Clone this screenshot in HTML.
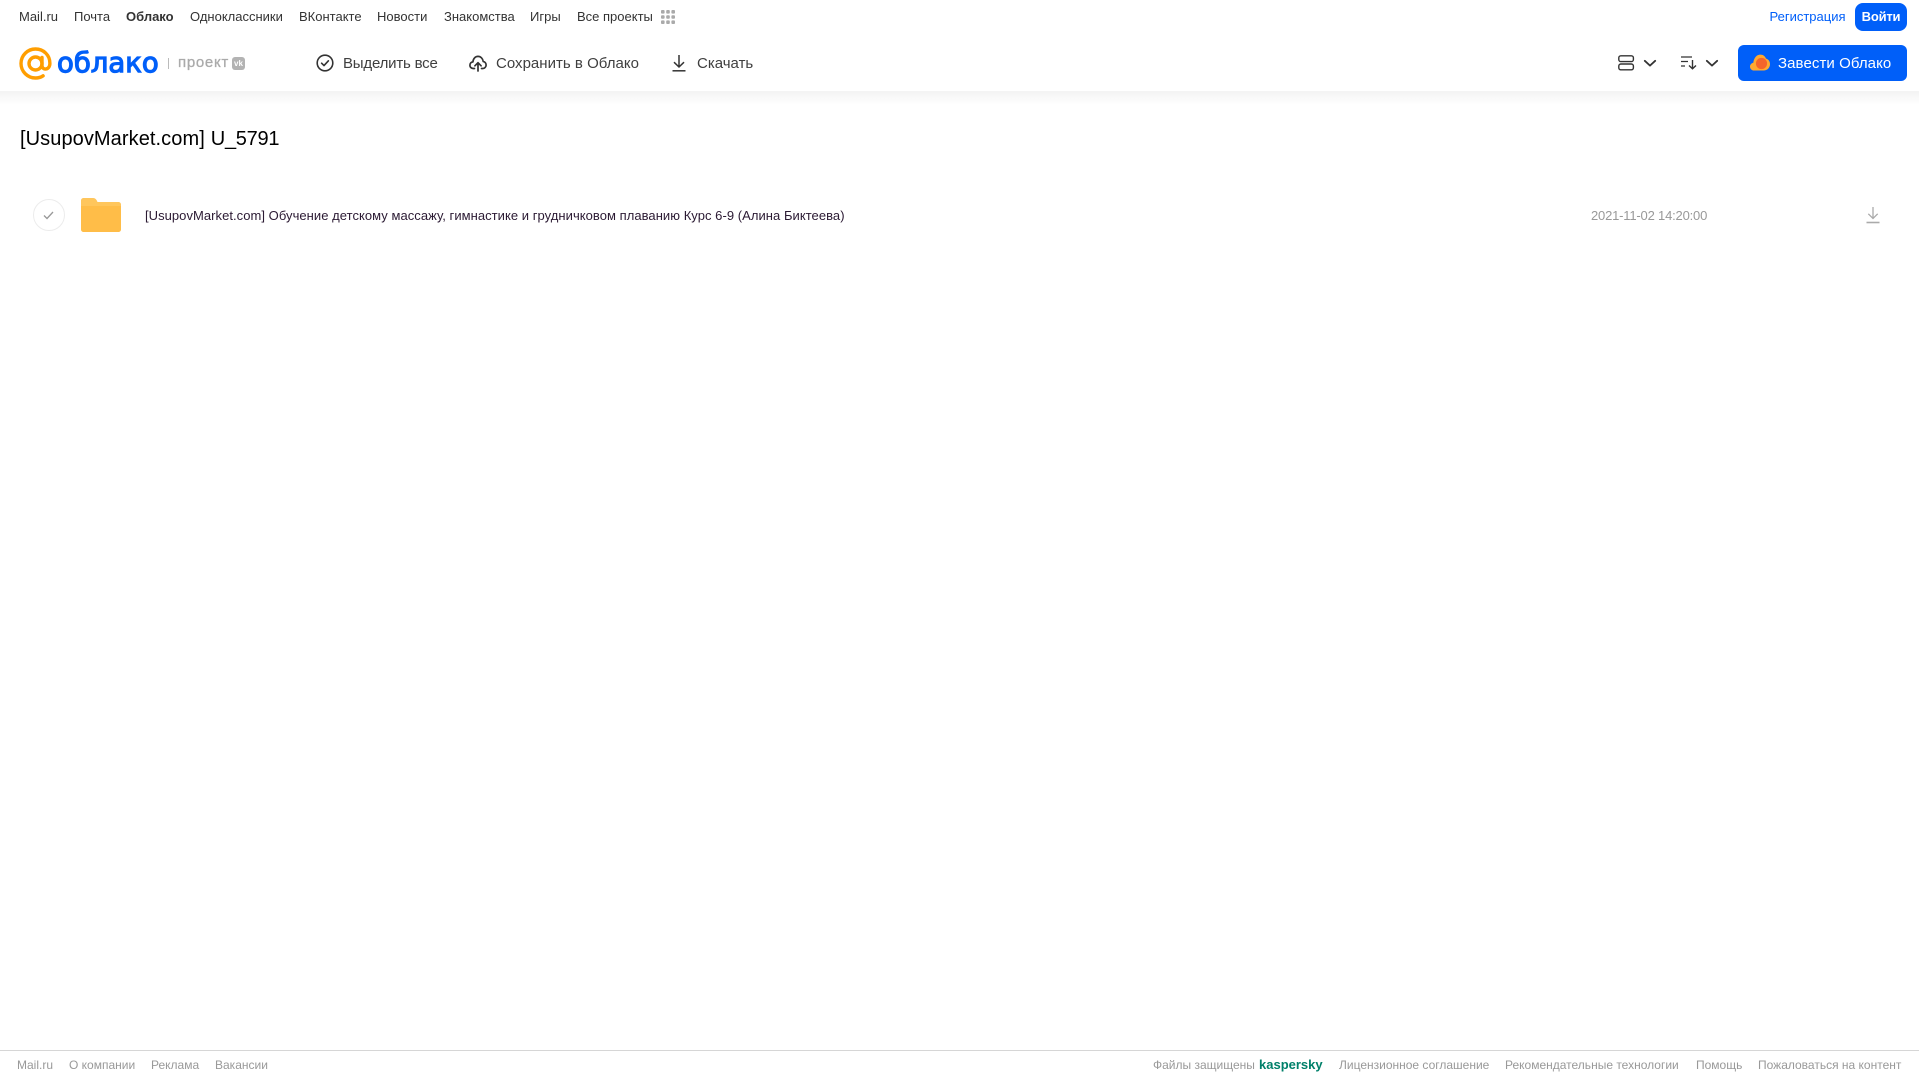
<!DOCTYPE html>
<html lang="ru">
<head>
<meta charset="utf-8">
<title>Облако</title>
<style>
html,body{margin:0;padding:0;background:#fff;}
body{width:1919px;height:1079px;position:relative;overflow:hidden;font-family:"Liberation Sans",Arial,sans-serif;}
.t{position:absolute;white-space:nowrap;line-height:20px;height:20px;}
.n{font-size:13px;color:#333;top:7px;}
.a{font-size:15px;color:#3f3f3f;top:54px;}
.f{font-size:12px;color:#999;top:1055px;}
svg{position:absolute;display:block;overflow:visible;}
</style>
</head>
<body>
<div style="position:absolute;left:0;top:91px;width:1919px;height:14px;background:linear-gradient(#f3f3f3,#fff);"></div>

<span class="t n" style="left:19px">Mail.ru</span>
<span class="t n" style="left:74px">Почта</span>
<span class="t n" style="left:126px;font-weight:bold">Облако</span>
<span class="t n" style="left:190px">Одноклассники</span>
<span class="t n" style="left:299px">ВКонтакте</span>
<span class="t n" style="left:377px">Новости</span>
<span class="t n" style="left:444px">Знакомства</span>
<span class="t n" style="left:530px">Игры</span>
<span class="t n" style="left:577px">Все проекты</span>
<svg style="left:661px;top:10px" width="14" height="14" fill="#aaa"><rect x="0" y="0" width="3.6" height="3.6" rx="1"/><rect x="5.2" y="0" width="3.6" height="3.6" rx="1"/><rect x="10.4" y="0" width="3.6" height="3.6" rx="1"/><rect x="0" y="5.2" width="3.6" height="3.6" rx="1"/><rect x="5.2" y="5.2" width="3.6" height="3.6" rx="1"/><rect x="10.4" y="5.2" width="3.6" height="3.6" rx="1"/><rect x="0" y="10.4" width="3.6" height="3.6" rx="1"/><rect x="5.2" y="10.4" width="3.6" height="3.6" rx="1"/><rect x="10.4" y="10.4" width="3.6" height="3.6" rx="1"/></svg>

<span class="t" style="left:1769.500px;top:7px;font-size:13px;color:#005ff9">Регистрация</span>
<div style="position:absolute;left:1855px;top:3px;width:52px;height:28px;border-radius:8px;background:#005ff9;color:#fff;font-size:13px;font-weight:bold;letter-spacing:-.2px;line-height:27px;text-align:center">Войти</div>

<!-- logo -->
<svg style="left:18.500px;top:47px" width="33" height="33" viewBox="0 0 33 33" fill="none" stroke="#ff9e00" stroke-width="3.4"><circle cx="16.5" cy="16.5" r="6.5"/><path d="M23 10.500V18.500c0 5 7.800 5 7.900-2.200C30.900 8 24.500 2 16.500 2 8.500 2 2 8.500 2 16.500S8.500 31 16.500 31c3.200 0 5.600-.8 7.600-2.200" stroke-linecap="round"/></svg>
<span class="t" style="left:57px;top:46.500px;height:32px;line-height:32px;font-size:27.500px;font-weight:normal;color:#005ff9;-webkit-text-stroke:1.200px #005ff9;font-family:'DejaVu Sans',sans-serif">облако</span>
<div style="position:absolute;left:168px;top:58px;width:1px;height:11px;background:#bbb"></div>
<span class="t" style="left:178px;top:53px;font-size:15px;color:#aaa;-webkit-text-stroke:.3px #aaa;letter-spacing:.7px">проект</span>
<div style="position:absolute;left:232px;top:57px;width:13px;height:13px;border-radius:3px;background:#b3b3b3;color:#fff;font-size:8px;font-weight:bold;line-height:13px;text-align:center">vk</div>

<!-- toolbar -->
<svg style="left:316px;top:54px" width="18" height="18" fill="none" stroke="#333" stroke-width="1.6"><circle cx="9" cy="9" r="7.8"/><path d="M5.6 9.2l2.4 2.4 4.4-4.8" stroke-linecap="round" stroke-linejoin="round"/></svg>
<span class="t a" style="left:343px;letter-spacing:-.2px">Выделить все</span>
<svg style="left:469px;top:54px" width="18" height="18" fill="none" stroke="#333" stroke-width="1.7" stroke-linecap="round" stroke-linejoin="round"><path d="M5.5 14.5H4.2C2.2 14.5.9 13 .9 11.2c0-1.700 1.200-3.100 3-3.300C4.200 4.600 6.300 2.400 9 2.400c2.700 0 4.800 2.100 5.200 5.100 1.700.2 2.900 1.800 2.900 3.600 0 1.800-1.400 3.400-3.300 3.400h-1.300"/><path d="M9 17V9M5.900 11.800L9 8.700l3.100 3.100"/></svg>
<span class="t a" style="left:496px;letter-spacing:.02px">Сохранить в Облако</span>
<svg style="left:671px;top:54px" width="16" height="18" fill="none" stroke="#333" stroke-width="1.5"><path d="M8 1v12M3 8.200L8 13l5-4.800"/><path d="M1.500 16.800h13"/></svg>
<span class="t a" style="left:697px">Скачать</span>

<svg style="left:1618px;top:55px" width="16" height="16" fill="none" stroke="#333" stroke-width="1.4"><rect x=".8" y=".8" width="14.600" height="5.800" rx="2"/><rect x=".8" y="9" width="14.600" height="5.800" rx="2"/></svg>
<svg style="left:1644px;top:60px" width="12" height="7" fill="none" stroke="#333" stroke-width="1.8"><path d="M.8.8L6 5.600 11.200.8" stroke-linecap="round" stroke-linejoin="round"/></svg>
<svg style="left:1681px;top:56px" width="16" height="14" fill="none" stroke="#333" stroke-width="1.200"><path d="M0 1h11M0 5.500h7M0 10h4"/><path d="M11.500 4v8.500M8 9.500l3.500 3.300L15 9.500" stroke-width="1.400"/></svg>
<svg style="left:1706px;top:60px" width="12" height="7" fill="none" stroke="#333" stroke-width="1.8"><path d="M.8.8L6 5.600 11.200.8" stroke-linecap="round" stroke-linejoin="round"/></svg>

<div style="position:absolute;left:1738px;top:45px;width:169px;height:36px;border-radius:6px;background:#005ff9"></div>
<svg style="left:1750px;top:54px" width="20" height="17" viewBox="0 0 20 17"><path d="M4 16.500C1.800 16.500 0 14.800 0 12.600c0-2 1.400-3.600 3.300-3.900C3.700 5.800 5.300 1 9.800.6c3-.3 5.300 1.500 6.200 4 2.300.6 4 2.700 4 5.500 0 3.700-2.800 6.400-6.300 6.400z" fill="#ffa930"/><circle cx="11.500" cy="9.500" r="5.600" fill="#f4652b"/></svg>
<span class="t a" style="left:1778px;color:#fff;letter-spacing:.08px">Завести Облако</span>

<!-- content -->
<span class="t" style="left:20px;top:127px;height:24px;line-height:24px;font-size:20px;color:#000"><span style="letter-spacing:.08px">[UsupovMarket.com]</span><span style="margin-left:.6px;letter-spacing:-.25px"> U_5791</span></span>

<div style="position:absolute;left:33px;top:199px;width:30px;height:30px;border:1px solid #ececec;border-radius:50%"></div>
<svg style="left:43px;top:211px" width="11" height="9" fill="none" stroke="#999" stroke-width="1.300"><path d="M1 4.500l3 3L10 1"/></svg>
<svg style="left:81px;top:198px" width="40" height="34" viewBox="0 0 40 34"><path d="M2.500 0H12c1.800 0 2.800.8 3.800 2.500L16.500 4H37.500c1.400 0 2.500 1.100 2.500 2.500V8H0V2.500C0 1.100 1.100 0 2.500 0z" fill="#ffc65c"/><path d="M0 8H40V31.500c0 1.400-1.100 2.500-2.500 2.500H2.500C1.100 34 0 32.900 0 31.500z" fill="#ffbd48"/></svg>
<span class="t" style="left:145px;top:206px;font-size:13px;color:#2b1a33;letter-spacing:.045px">[UsupovMarket.com] Обучение детскому массажу, гимнастике и грудничковом плаванию Курс 6-9 (Алина Биктеева)</span>
<span class="t" style="left:1591px;top:206px;font-size:13px;color:#999;letter-spacing:-.19px">2021-11-02 14:20:00</span>
<svg style="left:1866px;top:206px" width="14" height="18" fill="none" stroke="#aaa" stroke-width="1.300"><path d="M7 1v11.500M2.300 7.800L7 12.500l4.700-4.700"/><path d="M.5 16.500h13" stroke-width="1.600"/></svg>

<!-- footer -->
<div style="position:absolute;left:0;top:1050px;width:1919px;height:1px;background:#d6d6d6"></div>
<span class="t f" style="left:17px">Mail.ru</span>
<span class="t f" style="left:69px">О компании</span>
<span class="t f" style="left:151px">Реклама</span>
<span class="t f" style="left:215px">Вакансии</span>
<span class="t f" style="left:1153px">Файлы защищены</span>
<span class="t f" style="left:1259px;font-size:13px;font-weight:bold;color:#00806a">kaspersky</span>
<span class="t f" style="left:1339px">Лицензионное соглашение</span>
<span class="t f" style="left:1505px">Рекомендательные технологии</span>
<span class="t f" style="left:1696px">Помощь</span>
<span class="t f" style="left:1758px">Пожаловаться на контент</span>
</body>
</html>
